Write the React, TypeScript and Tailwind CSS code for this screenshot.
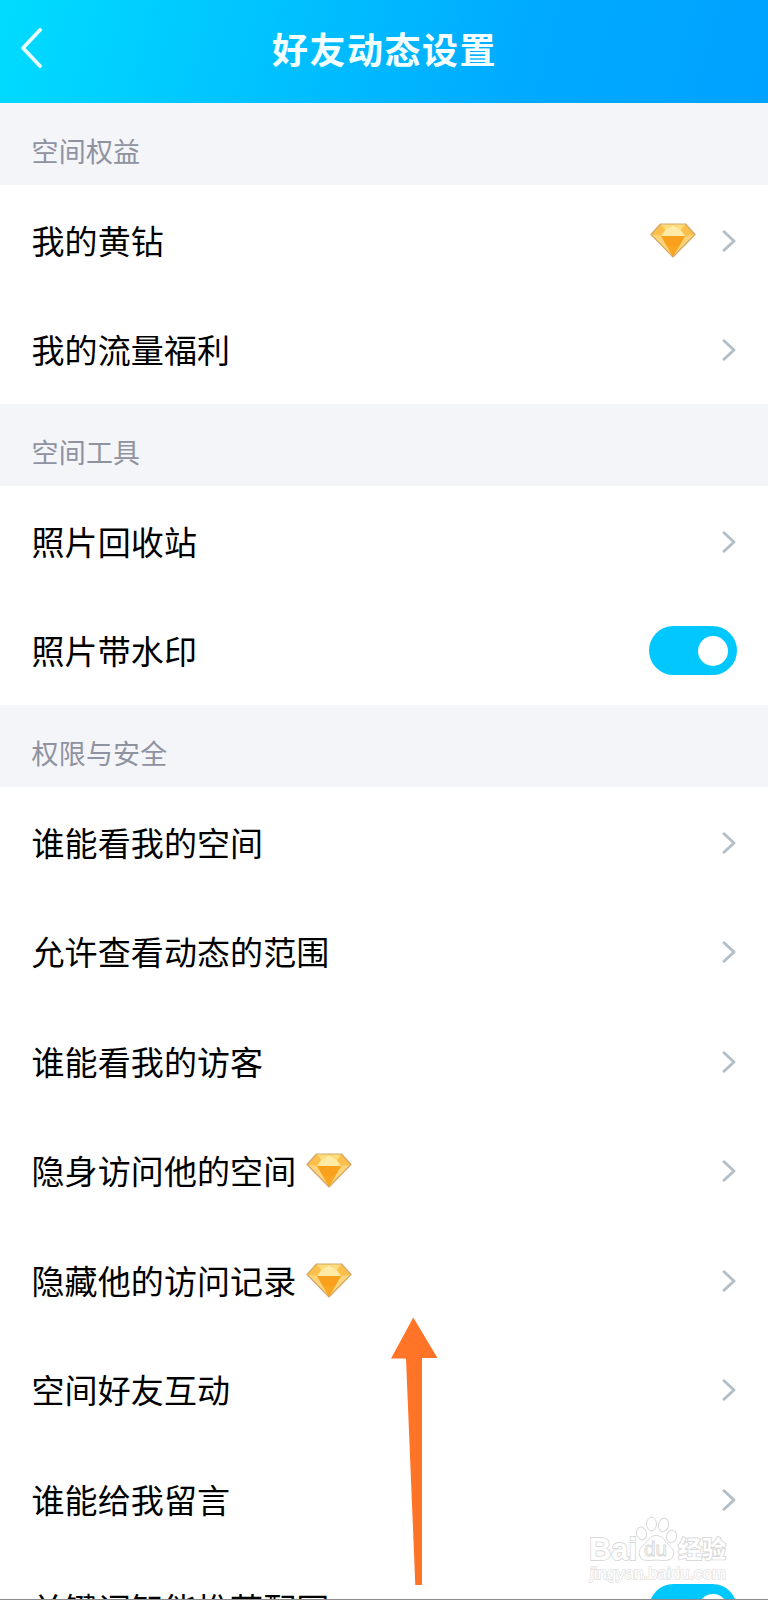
interface SettingItem {
  label: string;
  toggle?: boolean;
  gem?: "label" | "end";
}

interface SettingSection {
  title: string;
  items: SettingItem[];
}

const sections: SettingSection[] = [
  {
    title: "空间权益",
    items: [{ label: "我的黄钻", gem: "end" }, { label: "我的流量福利" }],
  },
  {
    title: "空间工具",
    items: [{ label: "照片回收站" }, { label: "照片带水印", toggle: true }],
  },
  {
    title: "权限与安全",
    items: [
      { label: "谁能看我的空间" },
      { label: "允许查看动态的范围" },
      { label: "谁能看我的访客" },
      { label: "隐身访问他的空间", gem: "label" },
      { label: "隐藏他的访问记录", gem: "label" },
      { label: "空间好友互动" },
      { label: "谁能给我留言" },
      { label: "关键词智能推荐配图", toggle: true },
    ],
  },
];

function GemIcon() {
  return (
    <svg className="h-[35px] w-[46px] shrink-0" viewBox="0 0 46 35" fill="none">
      <path d="M10.5 1H35.5L45 11.5L23 34L1 11.5Z" fill="#fdc653" />
      <path d="M10.5 1L1 11.5L11 13L15 6Z" fill="#fdbf4c" />
      <path d="M35.5 1L45 11.5L35 13L31 6Z" fill="#fdbf4c" />
      <path d="M10.5 1H23L16 8Z" fill="#fddc7c" />
      <path d="M35.5 1H23L30 8Z" fill="#fddc7c" />
      <path d="M23 2L30.5 7L35 13H11L15.5 7Z" fill="#ffeaa6" />
      <path d="M1 11.5L11 13L23 34Z" fill="#fed47a" />
      <path d="M45 11.5L35 13L23 34Z" fill="#fed47a" />
      <path d="M11 13H35L23 34Z" fill="#fba622" />
      <path d="M11 13H35L28.5 23H17.5Z" fill="#f9a01c" />
      <path
        d="M10.5 1H35.5L45 11.5L23 34L1 11.5Z"
        stroke="#d3a868"
        strokeWidth="1.2"
        strokeLinejoin="round"
      />
    </svg>
  );
}

function Chevron() {
  return (
    <svg className="mt-px mr-px h-6 w-3.5 shrink-0" viewBox="0 0 14 24" fill="none">
      <path
        d="M2 2.7L12 12L2 21.3"
        stroke="#b3bec8"
        strokeWidth="2.9"
        strokeLinecap="round"
        strokeLinejoin="round"
      />
    </svg>
  );
}

function Toggle() {
  return (
    <div className="flex h-[49px] w-[88px] items-center justify-end rounded-full bg-[#00c8ff] pr-[9px]">
      <div className="size-[30px] rounded-full bg-white" />
    </div>
  );
}

function Row({ item }: { item: SettingItem }) {
  return (
    <div className="flex h-[109.5px] items-center justify-between bg-white pt-px pr-[31px] pl-[31.5px]">
      <div className="flex items-center gap-[9.5px]">
        <span className="text-[33px] leading-none tracking-[0.1px] whitespace-nowrap text-black">
          {item.label}
        </span>
        {item.gem === "label" && <GemIcon />}
      </div>
      <div className="flex items-center gap-[26.5px]">
        {item.gem === "end" && <GemIcon />}
        {item.toggle ? <Toggle /> : <Chevron />}
      </div>
    </div>
  );
}

// Orange pointer drawn over the list
function SwipeArrow() {
  return (
    <svg
      className="absolute top-[1317px] left-[390px] h-[269px] w-[49px]"
      viewBox="0 0 49 269"
    >
      <path
        d="M23.3 0.5L47.5 41H32V268H25.3L16 41.5H1Z"
        fill="#ff7426"
      />
    </svg>
  );
}

function Watermark() {
  return (
    <svg
      className="absolute top-[1510px] left-[584px] h-[76px] w-[148px]"
      viewBox="0 0 148 76"
      fill="#fff"
      stroke="#d8d8d8"
      strokeWidth="1"
    >
      <g fontFamily="'Liberation Sans', 'Noto Sans CJK SC', sans-serif" paintOrder="stroke">
        <text x="5" y="50" fontSize="32" fontWeight="700" strokeWidth="1.8" textLength="48" lengthAdjust="spacingAndGlyphs">
          Bai
        </text>
        <text x="94" y="48" fontSize="24" fontWeight="700" strokeWidth="1.8" textLength="48" lengthAdjust="spacingAndGlyphs">
          经验
        </text>
        <text x="6" y="69" fontSize="17" strokeWidth="1.5" stroke="#e2e2e2" textLength="136" lengthAdjust="spacingAndGlyphs">
          jingyan.baidu.com
        </text>
      </g>
      <ellipse cx="57.5" cy="23.5" rx="5" ry="6.5" transform="rotate(-12 57.5 23.5)" />
      <ellipse cx="67.5" cy="14" rx="5" ry="6.8" />
      <ellipse cx="79.5" cy="15" rx="5" ry="6.8" transform="rotate(12 79.5 15)" />
      <ellipse cx="87.5" cy="26.5" rx="5" ry="6.3" transform="rotate(15 87.5 26.5)" />
      <path d="M72 25.5C66 25.5 64 31 60 34.5C56 38 54.5 41 55.5 45C57 51 62 51 72 50C82 51 88 51 89.5 45C90.5 40 87 37 84 34C80 30 78 25.5 72 25.5Z" />
      <text
        x="60"
        y="46"
        fontSize="20"
        fontFamily="'Liberation Sans', sans-serif"
        strokeWidth="0.9"
        textLength="23"
        lengthAdjust="spacingAndGlyphs"
      >
        du
      </text>
    </svg>
  );
}

export default function App() {
  return (
    <div
      lang="zh-CN"
      className="relative h-[1600px] w-[768px] overflow-hidden bg-white font-['Noto_Sans_CJK_SC',sans-serif]"
    >
      <header className="grid h-[103px] grid-cols-[1fr_auto_1fr] items-center bg-[linear-gradient(105deg,#00dcff_0%,#00c3ff_34%,#00aaff_68%,#00a2ff_100%)] px-5">
        <svg className="-mt-2 h-10 w-[23px]" viewBox="0 0 23 40" fill="none">
          <path
            d="M20 2L3 20L20 38"
            stroke="#e8feff"
            strokeWidth="3.8"
            strokeLinecap="round"
            strokeLinejoin="round"
          />
        </svg>
        <h1 className="-mt-2 ml-px text-[36px] leading-none font-bold tracking-[1.5px] text-[#f4ffff]">
          好友动态设置
        </h1>
      </header>

      {sections.map((section) => (
        <section key={section.title}>
          <h2 className="h-[82px] bg-[#f4f5f9] pt-[34px] pl-[31.5px] text-[27px] leading-none tracking-[0.2px] text-[#8f929f]">
            {section.title}
          </h2>
          {section.items.map((item) => (
            <Row key={item.label} item={item} />
          ))}
        </section>
      ))}

      <SwipeArrow />
      <Watermark />
      <div className="absolute inset-x-0 bottom-0 h-px bg-[#8c8c8c]" />
    </div>
  );
}
